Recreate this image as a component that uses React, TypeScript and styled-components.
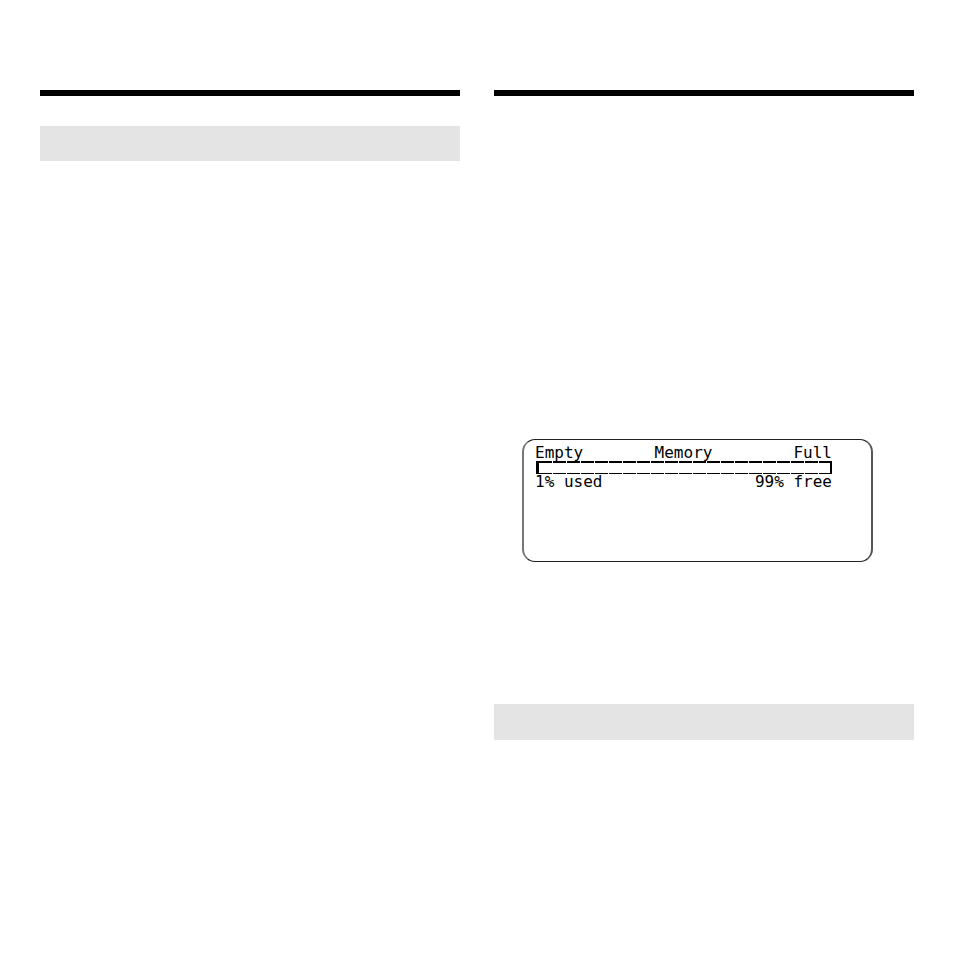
import React from "react";
import styled, { createGlobalStyle, css } from "styled-components";

const GlobalStyle = createGlobalStyle`
  *, *::before, *::after { box-sizing: border-box; }
  body { margin: 0; background: #ffffff; color: #000000; }
`;

const Page = styled.main`
  display: grid;
  grid-template-columns: 1fr 1fr;
  gap: 34px;
  min-height: 100vh;
  padding: 90px 40px;
`;

const Column = styled.section`
  display: flex;
  flex-direction: column;
  min-width: 0;
`;

const Rule = styled.hr`
  width: 100%;
  height: 6px;
  margin: 0;
  border: 0;
  background: #000000;
`;

const Band = styled.div<{ $gap: number; $height: number }>`
  height: ${(p) => p.$height}px;
  margin-top: ${(p) => p.$gap}px;
  background: #e4e4e4;
`;

const Display = styled.div`
  min-height: 123px;
  margin: 343px 41px 0 28px;
  padding: 5px 39px 5px 11px;
  border: 1px solid #222222;
  border-left: 2px solid #777777;
  border-right: 2px solid #555555;
  border-radius: 13px;
  font: 16px/16px "DejaVu Sans Mono", monospace;
`;

const Labels = styled.div`
  display: grid;
  grid-template-columns: 1fr auto 1fr;
  height: 16px;
  white-space: pre;

  > :last-child {
    text-align: right;
  }
`;

const Readings = styled.div`
  display: flex;
  justify-content: space-between;
  height: 16px;
  white-space: pre;
`;

const dashes = css`
  repeating-linear-gradient(90deg, #000000 0 13px, #ffffff 13px 14px)
`;

const Meter = styled.div`
  height: 13px;
  margin-left: 1px;
  border-left: 3px solid #000000;
  border-right: 2px solid #000000;
  background:
    ${dashes} top / 100% 2px no-repeat,
    ${dashes} bottom / 100% 1px no-repeat;
`;

export default function App() {
  return (
    <>
      <GlobalStyle />
      <Page>
        <Column>
          <Rule />
          <Band $gap={30} $height={35} />
        </Column>
        <Column>
          <Rule />
          <Display>
            <Labels>
              <span>Empty</span>
              <span>Memory</span>
              <span>Full</span>
            </Labels>
            <Meter
              role="meter"
              aria-label="Memory"
              aria-valuemin={0}
              aria-valuemax={100}
              aria-valuenow={1}
            />
            <Readings>
              <span>1% used</span>
              <span>99% free</span>
            </Readings>
          </Display>
          <Band $gap={142} $height={36} />
        </Column>
      </Page>
    </>
  );
}
